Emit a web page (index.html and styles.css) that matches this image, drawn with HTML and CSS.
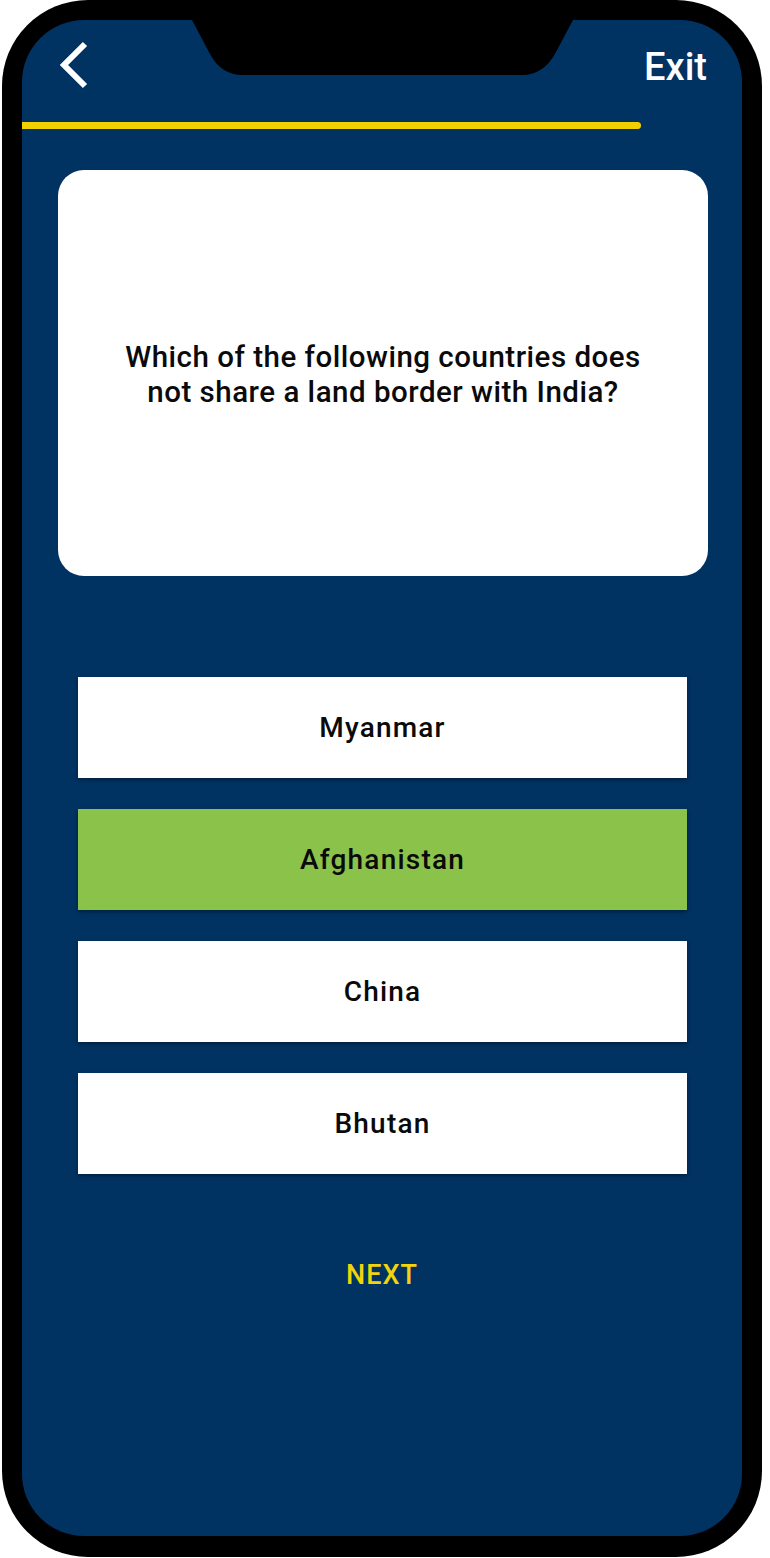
FILE: index.html
```html
<!DOCTYPE html>
<html lang="en">
<head>
<meta charset="utf-8">
<title>Quiz</title>
<link rel="stylesheet" href="styles.css">
</head>
<body>
<div class="phone">
  <div class="screen">
    <svg class="notch" width="381" height="55" viewBox="0 0 381 55" aria-hidden="true">
      <path d="M0,0 L381,0 L364,32 Q352,55 330,55 L51,55 Q29,55 18,34 Z" fill="#000"/>
    </svg>
    <div class="header">
      <svg class="back" width="36" height="52" viewBox="0 0 36 52" aria-label="Back">
        <path d="M31,5 L10,26 L31,47" fill="none" stroke="#fff" stroke-width="6" stroke-linecap="butt" stroke-linejoin="miter"/>
      </svg>
      <div class="exit">Exit</div>
    </div>
    <div class="progress"></div>
    <div class="card">
      <p class="question">Which of the following countries does<br>not share a land border with India?</p>
    </div>
    <div class="options">
      <div class="option">Myanmar</div>
      <div class="option correct">Afghanistan</div>
      <div class="option">China</div>
      <div class="option">Bhutan</div>
    </div>
    <div class="next">NEXT</div>
  </div>
</div>
</body>
</html>
```

FILE: styles.css
```css
html, body {
  margin: 0;
  padding: 0;
  background: #ffffff;
}

body {
  font-family: Roboto, "Liberation Sans", Arial, sans-serif;
}

.phone {
  margin-left: 2px;
  width: 760px;
  height: 1557px;
  background: #000;
  border-radius: 86px;
  padding: 20px 20px 21px 20px;
  box-sizing: border-box;
}

.screen {
  position: relative;
  height: 1516px;
  background: #003262;
  border-radius: 62px;
  overflow: hidden;
}

.notch {
  position: absolute;
  top: 0;
  left: 170px;
  display: block;
}

.header {
  display: flex;
  justify-content: space-between;
  align-items: flex-start;
  height: 102px;
  padding: 0 35px 0 32px;
  box-sizing: border-box;
}

.back {
  display: block;
  margin-top: 19px;
}

.exit {
  margin-top: 28px;
  font-size: 38px;
  line-height: 38px;
  font-weight: 500;
  color: #ffffff;
}

.progress {
  width: 619px;
  height: 7px;
  background: #f2d000;
  border-radius: 0 4px 4px 0;
}

.card {
  margin: 41px 0 0 36px;
  width: 650px;
  height: 406px;
  padding-top: 4px;
  box-sizing: border-box;
  background: #ffffff;
  border-radius: 26px;
  display: flex;
  align-items: center;
  justify-content: center;
}

.question {
  margin: 0;
  text-align: center;
  font-size: 29.5px;
  line-height: 35px;
  letter-spacing: 0.5px;
  font-weight: 500;
  color: #0a0a0a;
}

.options {
  margin: 101px 0 0 56px;
  width: 609px;
  display: flex;
  flex-direction: column;
  gap: 31px;
}

.option {
  height: 101px;
  background: #ffffff;
  display: flex;
  align-items: center;
  justify-content: center;
  font-size: 28px;
  letter-spacing: 1.2px;
  font-weight: 500;
  color: #0a0a0a;
  box-shadow: 0 2px 4px rgba(0, 0, 0, 0.35);
}

.option.correct {
  background: #8bc34a;
}

.next {
  margin-top: 85px;
  text-align: center;
  font-size: 27px;
  line-height: 32px;
  letter-spacing: 1px;
  font-weight: 500;
  color: #f2d30c;
}
```
